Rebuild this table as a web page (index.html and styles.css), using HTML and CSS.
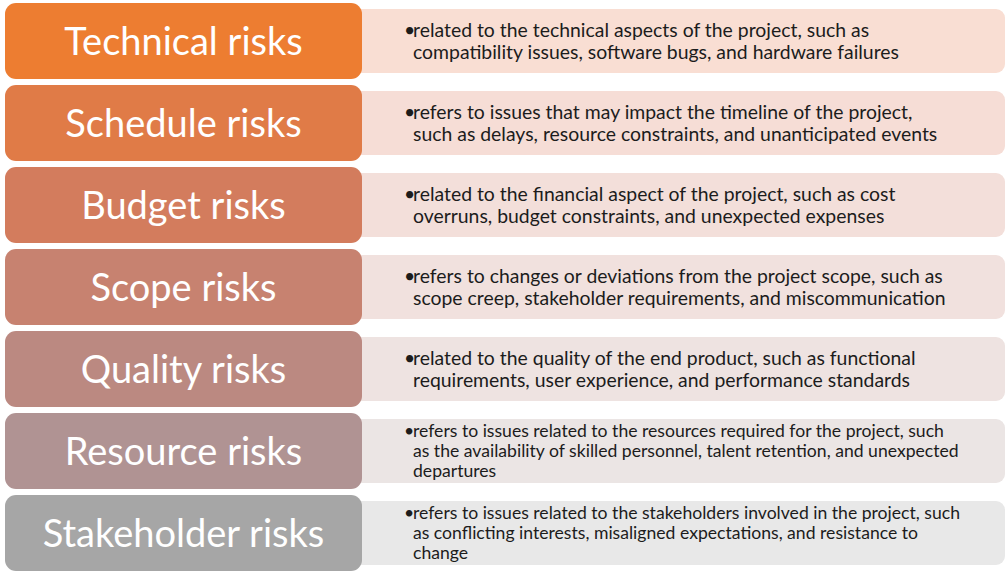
FILE: index.html
```html
<!DOCTYPE html>
<html lang="en">
<head>
<meta charset="utf-8">
<title>Project risks</title>
<link rel="stylesheet" href="styles.css">
</head>
<body>
<div class="risks">
  <div class="row r1">
    <div class="label">Technical risks</div>
    <div class="desc"><p>related to the technical aspects of the project, such as<br>compatibility issues, software bugs, and hardware failures</p></div>
  </div>
  <div class="row r2">
    <div class="label">Schedule risks</div>
    <div class="desc"><p>refers to issues that may impact the timeline of the project,<br>such as delays, resource constraints, and unanticipated events</p></div>
  </div>
  <div class="row r3">
    <div class="label">Budget risks</div>
    <div class="desc"><p>related to the financial aspect of the project, such as cost<br>overruns, budget constraints, and unexpected expenses</p></div>
  </div>
  <div class="row r4">
    <div class="label">Scope risks</div>
    <div class="desc"><p>refers to changes or deviations from the project scope, such as<br>scope creep, stakeholder requirements, and miscommunication</p></div>
  </div>
  <div class="row r5">
    <div class="label">Quality risks</div>
    <div class="desc"><p>related to the quality of the end product, such as functional<br>requirements, user experience, and performance standards</p></div>
  </div>
  <div class="row r6">
    <div class="label">Resource risks</div>
    <div class="desc small"><p>refers to issues related to the resources required for the project, such<br>as the availability of skilled personnel, talent retention, and unexpected<br>departures</p></div>
  </div>
  <div class="row r7">
    <div class="label">Stakeholder risks</div>
    <div class="desc small"><p>refers to issues related to the stakeholders involved in the project, such<br>as conflicting interests, misaligned expectations, and resistance to<br>change</p></div>
  </div>
</div>
</body>
</html>
```
FILE: styles.css
```css
html, body {
  margin: 0;
  padding: 0;
  background: #ffffff;
}
.risks {
  width: 1007px;
  box-sizing: border-box;
  padding: 3px 2px 0 5px;
  display: flex;
  flex-direction: column;
  gap: 6px;
  font-family: Lato, "Liberation Sans", sans-serif;
}
.row {
  display: grid;
  grid-template-columns: 357px 1fr;
  height: 76px;
}
.label {
  position: relative;
  z-index: 1;
  border-radius: 11px;
  color: #ffffff;
  font-size: 38px;
  display: flex;
  align-items: center;
  justify-content: center;
  padding-bottom: 2px;
  box-sizing: border-box;
  white-space: nowrap;
}
.desc {
  margin: 6px 0 6px -6px;
  border-radius: 0 9px 9px 0;
  display: flex;
  align-items: center;
  padding-left: 48px;
  padding-right: 10px;
  color: #1c1c1c;
  font-size: 19.4px;
  line-height: 22px;
  white-space: nowrap;
}
.desc.small {
  font-size: 17.6px;
  line-height: 20px;
}
.desc p {
  margin: 0;
  padding-left: 9px;
  text-indent: -9px;
}
.desc p::before {
  content: "\2022";
  display: inline-block;
  width: 9px;
  text-indent: 0;
}
.r1 .label { background: #ed7d31; }
.r2 .label { background: #e07b47; }
.r3 .label { background: #d37c5d; }
.r4 .label { background: #c78270; }
.r5 .label { background: #bb8981; }
.r6 .label { background: #b09393; }
.r7 .label { background: #a6a6a6; }
.r1 .desc { background: #f9ded3; }
.r2 .desc { background: #f6ddd6; }
.r3 .desc { background: #f3dfda; }
.r4 .desc { background: #f1e1de; }
.r5 .desc { background: #eee3e1; }
.r6 .desc { background: #ebe5e4; }
.r7 .desc { background: #e8e8e8; }
```
